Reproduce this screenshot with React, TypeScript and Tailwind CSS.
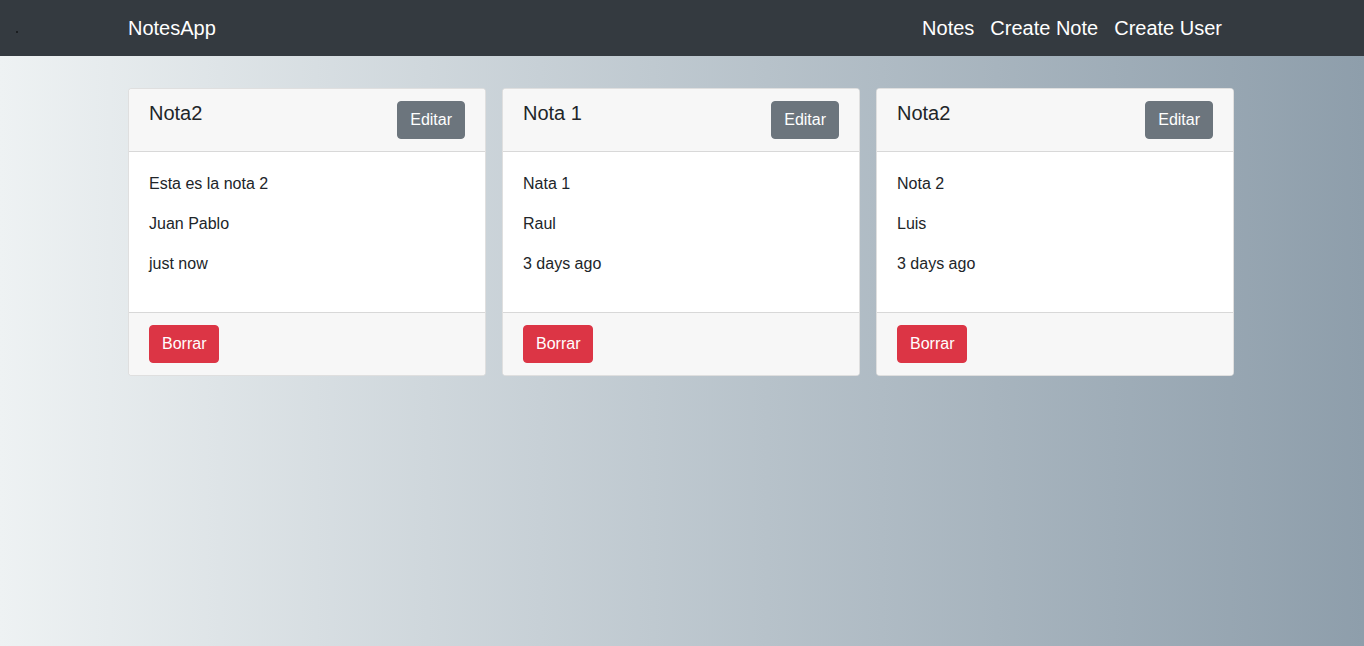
import React from "react";

const notes = [
  { title: "Nota2", content: "Esta es la nota 2", author: "Juan Pablo", date: "just now" },
  { title: "Nota 1", content: "Nata 1", author: "Raul", date: "3 days ago" },
  { title: "Nota2", content: "Nota 2", author: "Luis", date: "3 days ago" },
];

function Card({ n }: { n: (typeof notes)[number] }) {
  return (
    <div className="w-[358px] bg-white border border-[rgba(0,0,0,0.125)] rounded-[4px] flex flex-col overflow-hidden">
      <div className="bg-[#f7f7f7] border-b border-[rgba(0,0,0,0.125)] px-5 py-3 flex justify-between items-start">
        <h5 className="text-[20px] leading-[24px] text-[#212529] font-medium">{n.title}</h5>
        <button className="bg-[#6c757d] text-white text-[16px] leading-[24px] px-3 py-[6px] rounded-[4px] border border-[#6c757d]">
          Editar
        </button>
      </div>
      <div className="px-5 pt-5 pb-5 text-[16px] leading-[24px] text-[#212529]">
        <p className="mb-4">{n.content}</p>
        <p className="mb-4">{n.author}</p>
        <p className="mb-4">{n.date}</p>
      </div>
      <div className="bg-[#f7f7f7] border-t border-[rgba(0,0,0,0.125)] px-5 py-3">
        <button className="bg-[#dc3545] text-white text-[16px] leading-[24px] px-3 py-[6px] rounded-[4px] border border-[#dc3545]">
          Borrar
        </button>
      </div>
    </div>
  );
}

export default function App() {
  return (
    <div
      className="min-h-screen bg-gradient-to-r from-[#eef2f3] to-[#8e9eab]"
      style={{ fontFamily: '"Liberation Sans", Arial, sans-serif' }}
    >
      <nav className="h-14 bg-[#343a40] relative">
        <span className="absolute left-[16px] top-[31px] w-[2px] h-[2px] bg-[#1a1d20]" />
        <div className="w-[1108px] mx-auto h-full flex items-center justify-between">
          <span className="text-white text-[20px] leading-[30px]">NotesApp</span>
          <div className="flex items-center mr-[6px]">
            <a className="text-white text-[20px] leading-[30px] px-2">Notes</a>
            <a className="text-white text-[20px] leading-[30px] px-2">Create Note</a>
            <a className="text-white text-[20px] leading-[30px] px-2">Create User</a>
          </div>
        </div>
      </nav>
      <div className="w-[1108px] mx-auto pt-8 flex gap-4 items-start">
        {notes.map((n, i) => (
          <Card key={i} n={n} />
        ))}
      </div>
    </div>
  );
}
